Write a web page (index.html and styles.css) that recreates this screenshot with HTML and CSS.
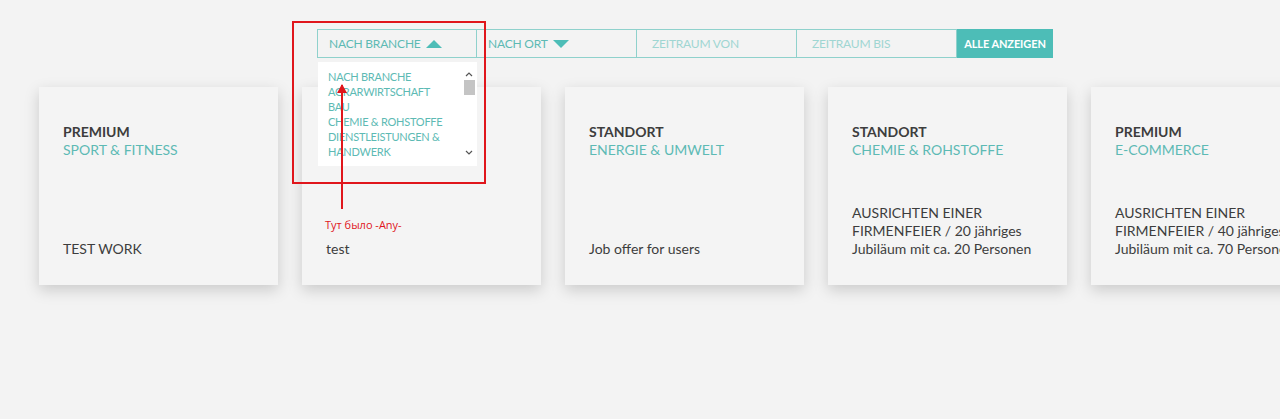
FILE: index.html
```html
<!DOCTYPE html>
<html lang="de">
<head>
  <meta charset="UTF-8">
  <title>Jobs</title>
  <link rel="stylesheet" href="styles.css">
</head>
<body>

<div class="filters">
  <div class="filter">
    <div class="field open">NACH BRANCHE <span class="caret up"></span></div>
    <div class="dropdown">
      <ul>
        <li>NACH BRANCHE</li>
        <li>AGRARWIRTSCHAFT</li>
        <li>BAU</li>
        <li>CHEMIE &amp; ROHSTOFFE</li>
        <li>DIENSTLEISTUNGEN &amp; HANDWERK</li>
      </ul>
      <div class="scrollbar">
        <svg class="sb-arrow" width="8" height="6" viewBox="0 0 8 6"><path d="M1 5 L4 2 L7 5" fill="none" stroke="#555" stroke-width="1.2"/></svg>
        <span class="sb-thumb"></span>
        <svg class="sb-arrow down" width="8" height="6" viewBox="0 0 8 6"><path d="M1 1 L4 4 L7 1" fill="none" stroke="#555" stroke-width="1.2"/></svg>
      </div>
    </div>
    <div class="mark"></div>
    <div class="pointer"></div>
    <div class="note">Тут было -Any-</div>
  </div>
  <div class="field">NACH ORT <span class="caret"></span></div>
  <div class="field light">ZEITRAUM VON</div>
  <div class="field light">ZEITRAUM BIS</div>
  <button class="show-all">ALLE ANZEIGEN</button>
</div>

<div class="cards">
  <div class="card">
    <div class="kind">PREMIUM</div>
    <div class="branch">SPORT &amp; FITNESS</div>
    <div class="title">TEST WORK</div>
  </div>
  <div class="card">
    <div class="title">test</div>
  </div>
  <div class="card">
    <div class="kind">STANDORT</div>
    <div class="branch">ENERGIE &amp; UMWELT</div>
    <div class="title">Job offer for users</div>
  </div>
  <div class="card">
    <div class="kind">STANDORT</div>
    <div class="branch">CHEMIE &amp; ROHSTOFFE</div>
    <div class="title">AUSRICHTEN EINER FIRMENFEIER / 20 jähriges Jubiläum mit ca. 20 Personen</div>
  </div>
  <div class="card">
    <div class="kind">PREMIUM</div>
    <div class="branch">E-COMMERCE</div>
    <div class="title">AUSRICHTEN EINER FIRMENFEIER / 40 jähriges Jubiläum mit ca. 70 Personen</div>
  </div>
</div>

</body>
</html>
```

FILE: styles.css
```css
body {
  font-family: Lato, "Open Sans", sans-serif;
  background: #f3f3f3;
  margin: 0; padding: 0;
  color: #444;
}

.filters { display: flex; margin: 29px 0 0 317px; height: 29px; position: relative; z-index: 2; }
.filter { position: relative; }
.field {
  width: 160px; height: 29px; box-sizing: border-box;
  border: 1px solid #8fd1cc; border-left: none;
  padding: 0 11px; display: flex; align-items: center; gap: 5px;
  font-size: 12px; color: #5dbab4; letter-spacing: -.2px;
}
.filter .field { border-left: 1px solid #8fd1cc; }
.field.light { color: #9fd6d2; padding-left: 15px; }
.caret { width: 0; height: 0; border-left: 8px solid transparent; border-right: 8px solid transparent; border-top: 8px solid #4dbdb7; }
.caret.up { border-top: none; border-bottom: 8px solid #4dbdb7; }
.show-all {
  width: 96px; height: 29px; border: none; background: #4dbdb7; color: white;
  font-family: inherit; font-size: 11px; font-weight: bold; padding: 0; letter-spacing: -.1px;
}

.dropdown {
  position: absolute; top: 33px; left: 1px; width: 159px; height: 104px;
  background: white; display: flex; box-sizing: border-box; padding: 7px 2px 6px 10px;
}
.dropdown ul { list-style: none; margin: 0; padding: 0; flex: 1; font-size: 11px; line-height: 15px; color: #5dbab4; letter-spacing: -.25px; }
.scrollbar { width: 12px; display: flex; flex-direction: column; align-items: center; padding-top: 2px; }
.sb-arrow { display: block; margin-bottom: 3px; }
.sb-arrow.down { margin: auto 0 4px; }
.sb-thumb { width: 11px; height: 15px; background: #c4c4c4; }

.mark { position: absolute; top: -8px; left: -25px; width: 194px; height: 163px; box-sizing: border-box; border: 2px solid #e0161c; }
.pointer { position: absolute; top: 56px; left: 24px; width: 2px; height: 124px; background: #e0161c; }
.pointer::before {
  content: ""; position: absolute; top: -1px; left: -4px;
  border-left: 5px solid transparent; border-right: 5px solid transparent; border-bottom: 9px solid #e0161c;
}
.note { position: absolute; top: 188px; left: 8px; white-space: nowrap; color: #e0161c; font-family: "Open Sans", sans-serif; font-size: 11px; }

.cards { display: flex; gap: 24px; margin-top: 14px; padding: 15px 0 30px 39px; overflow: hidden; }
.card {
  flex: none; width: 239px; height: 198px; box-sizing: border-box;
  background: #f4f4f4; box-shadow: 0 5px 14px rgba(0,0,0,.17);
  padding: 36px 24px 27px; display: flex; flex-direction: column;
  font-size: 14px; line-height: 18px;
}
.kind { font-weight: bold; color: #3d3d3d; }
.branch { color: #5dbab4; }
.title { margin-top: auto; color: #3d3d3d; }
```
